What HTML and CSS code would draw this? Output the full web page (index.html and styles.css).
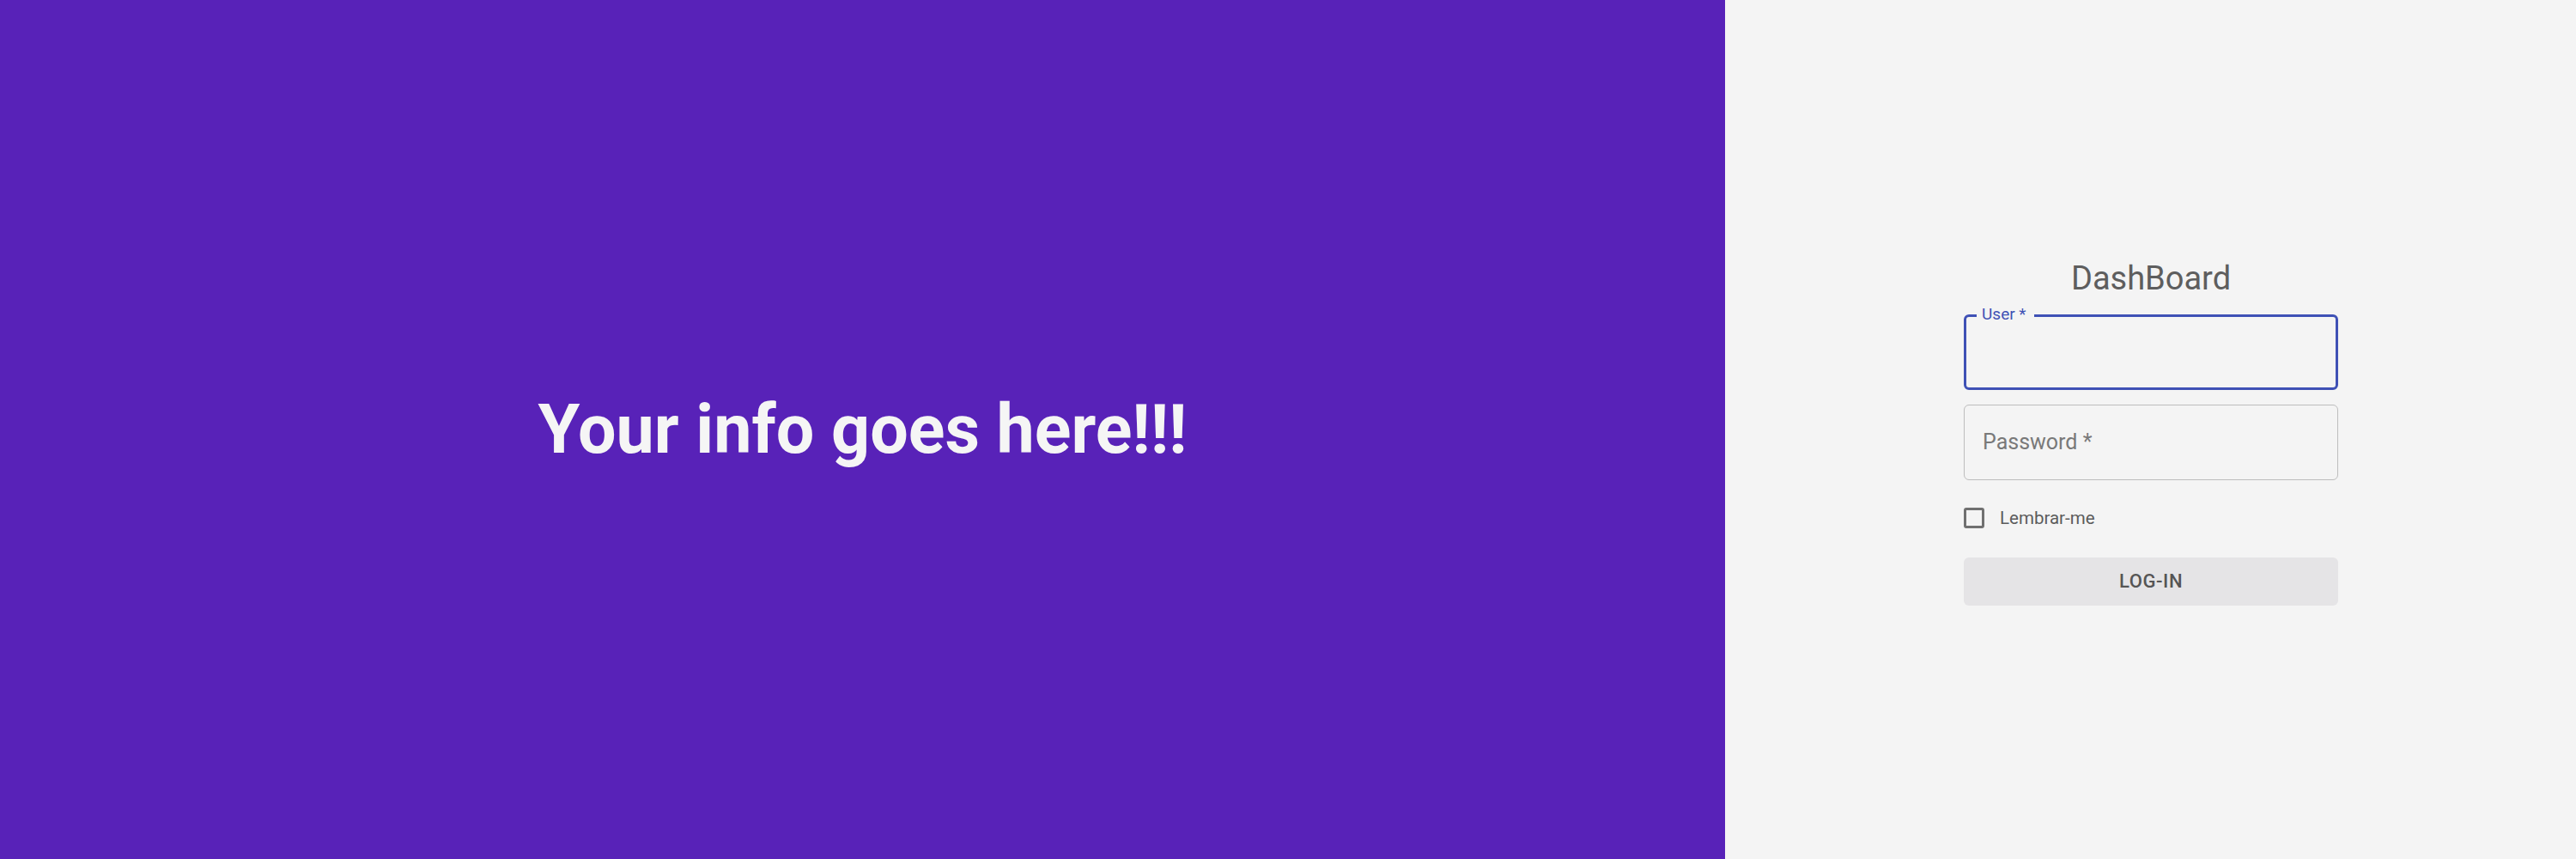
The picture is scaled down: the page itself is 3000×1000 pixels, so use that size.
FILE: index.html
```html
<!DOCTYPE html>
<html lang="pt">
<head>
<meta charset="utf-8">
<title>DashBoard</title>
<link rel="stylesheet" href="styles.css">
</head>
<body>
<div class="page">
  <section class="info">
    <h1 class="info-title">Your info goes here!!!</h1>
  </section>
  <section class="login">
    <form class="login-form">
      <h2 class="login-title">DashBoard</h2>
      <div class="field field-focused">
        <span class="field-label-small">User *</span>
        <input class="field-input" type="text" aria-label="User">
      </div>
      <div class="field">
        <span class="field-label">Password *</span>
      </div>
      <label class="remember">
        <span class="checkbox"></span>
        <span class="remember-text">Lembrar-me</span>
      </label>
      <button class="login-button" type="button">LOG-IN</button>
    </form>
  </section>
</div>
</body>
</html>
```

FILE: styles.css
```css
* { box-sizing: border-box; }
html, body {
  margin: 0;
  padding: 0;
  width: 3000px;
  height: 1000px;
  overflow: hidden;
}
body {
  font-family: Roboto, "Liberation Sans", sans-serif;
}
.page {
  display: flex;
  width: 3000px;
  height: 1000px;
}
.info {
  width: 2009px;
  flex: 0 0 2009px;
  background: #5822b8;
  display: flex;
  align-items: center;
  justify-content: center;
}
.info-title {
  margin: 0;
  font-size: 79px;
  font-weight: 700;
  color: #f5f5f5;
  line-height: 92px;
}
.login {
  flex: 1 1 auto;
  background: #f4f4f4;
  display: flex;
  align-items: center;
  justify-content: center;
}
.login-form {
  width: 436px;
  display: flex;
  flex-direction: column;
  margin-left: 1px;
  padding-top: 6px;
}
.login-title {
  margin: 0;
  font-size: 38px;
  line-height: 44px;
  font-weight: 400;
  color: #5e5e5e;
  text-align: center;
}
.field {
  position: relative;
  height: 88px;
  border: 1.5px solid #bdbdbd;
  border-radius: 6px;
  margin-top: 17px;
  display: flex;
  align-items: center;
}
.field-focused {
  margin-top: 20px;
  border: 3px solid #3f51b5;
}
.field-label {
  font-size: 25px;
  color: #797979;
  padding-left: 21px;
  margin-bottom: 1px;
}
.field-label-small {
  position: absolute;
  left: 12px;
  top: -14px;
  padding: 0 9px 0 6px;
  background: #f4f4f4;
  font-size: 19px;
  line-height: 22px;
  color: #3f51b5;
}
.field-input {
  border: 0;
  outline: 0;
  background: transparent;
  width: 100%;
  height: 100%;
  padding: 0 21px;
  font-size: 25px;
  font-family: inherit;
}
.remember {
  display: flex;
  align-items: center;
  height: 44px;
  margin-top: 22px;
}
.checkbox {
  width: 24px;
  height: 24px;
  border: 3px solid #707070;
  border-radius: 3px;
  flex: 0 0 24px;
}
.remember-text {
  margin-left: 18px;
  font-size: 20.5px;
  color: #5c5c5c;
}
.login-button {
  margin-top: 24px;
  height: 56px;
  border: 0;
  border-radius: 6px;
  background: #e5e4e6;
  font-family: inherit;
  font-size: 22px;
  font-weight: 500;
  letter-spacing: 0.6px;
  color: #555555;
  padding: 0;
}
```
